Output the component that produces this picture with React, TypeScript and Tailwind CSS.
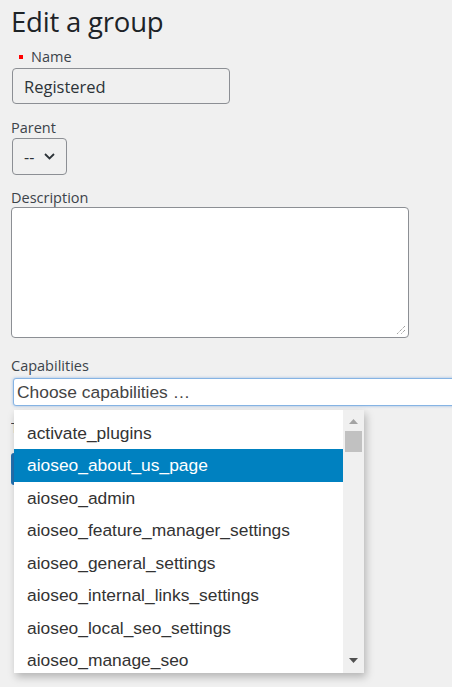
const capabilities = [
  'activate_plugins',
  'aioseo_about_us_page',
  'aioseo_admin',
  'aioseo_feature_manager_settings',
  'aioseo_general_settings',
  'aioseo_internal_links_settings',
  'aioseo_local_seo_settings',
  'aioseo_manage_seo',
]

const uiFont = { fontFamily: '"Open Sans", "Noto Sans", sans-serif' }
const arial = { fontFamily: '"Liberation Sans", Arial, sans-serif' }

export default function App() {
  const selected = 'aioseo_about_us_page'

  return (
    <div
      className="relative min-h-[687px] overflow-hidden bg-[#f0f0f0] pl-[11px] pt-[2px] text-[#1d2327]"
      style={uiFont}
    >
      <h1 className="text-[27.5px] leading-[40px] tracking-[-0.2px] text-[#1d2327]">Edit a group</h1>

      {/* Name */}
      <div className="mt-[6px] flex items-center gap-[8px] pl-[8px] text-[14.5px] leading-[17px] text-[#3c434a]">
        <span className="h-[4px] w-[4px] bg-[#ff0000]" />
        <span>Name</span>
      </div>
      <input
        readOnly
        value="Registered"
        className="mt-[3px] ml-[1px] block h-[36px] w-[218px] rounded-[4px] border border-[#8c8f94] bg-[#f0f0f0] px-[11px] text-[16.5px] text-[#2c3338] outline-none"
      />

      {/* Parent */}
      <label className="mt-[15px] block text-[14.5px] leading-[17px] text-[#3c434a]">Parent</label>
      <div className="mt-[2px] ml-[1px] flex h-[37px] w-[55px] items-center gap-[10px] rounded-[4px] border border-[#8c8f94] bg-[#f0f0f0] pl-[11px] text-[16px] text-[#2c3338]">
        <span>--</span>
        <svg width="11" height="7" viewBox="0 0 11 7" fill="none">
          <path d="M1 1l4.5 4.5L10 1" stroke="#2c3338" strokeWidth="1.8" />
        </svg>
      </div>

      {/* Description */}
      <label className="mt-[14px] block text-[14.5px] leading-[17px] text-[#3c434a]">Description</label>
      <div className="relative mt-[1px] h-[131px] w-[398px] rounded-[4px] border border-[#8c8f94] bg-white">
        <svg className="absolute bottom-[2px] right-[2px]" width="10" height="10" viewBox="0 0 10 10">
          <path d="M9 1L1 9M9 5L5 9" stroke="#555" strokeWidth="0.8" strokeDasharray="1 1" />
        </svg>
      </div>

      {/* Capabilities */}
      <label className="mt-[19px] block text-[14.5px] leading-[17px] text-[#3c434a]">Capabilities</label>
      <div
        className="mt-[4px] ml-[2px] flex h-[28px] w-[460px] items-center rounded-[3px] border border-[#86b4e4] bg-white pl-[3px] text-[17.4px] text-[#444] shadow-[0_0_3px_rgba(90,150,220,0.6)]"
        style={arial}
      >
        Choose capabilities …
      </div>
      <p className="mt-[13px] w-[358px] truncate text-[14px] leading-[17px] text-[#3c434a]">
        The group's capabilities are granted to its members.
      </p>
      <div className="mt-[17px] flex h-[32px] w-[60px] items-center rounded-[3px] bg-[#2271b1] px-[10px] text-[13px] text-white">
        Save
      </div>

      {/* Open capabilities dropdown */}
      <div
        className="absolute left-[14px] top-[410px] flex h-[263px] w-[350px] bg-white shadow-[2px_4px_8px_rgba(0,0,0,0.25)]"
        style={arial}
      >
        <ul className="flex-1 overflow-hidden pt-[6.5px]">
          {capabilities.map((cap) => (
            <li
              key={cap}
              className={
                cap === selected
                  ? 'flex h-[32.5px] items-center bg-[#0081c0] pl-[13px] text-[17.4px] text-white'
                  : 'flex h-[32.5px] items-center pl-[13px] text-[17.4px] text-[#333]'
              }
            >
              {cap}
            </li>
          ))}
        </ul>
        <div className="flex w-[21px] flex-col items-center bg-[#f0f0f0]">
          <svg className="mt-[9px]" width="9" height="5" viewBox="0 0 9 5">
            <path d="M4.5 0L9 5H0z" fill="#a3a3a3" />
          </svg>
          <div className="mt-[7px] h-[21px] w-[17px] bg-[#c1c1c1]" />
          <div className="flex-1" />
          <svg className="mb-[10px]" width="9" height="5" viewBox="0 0 9 5">
            <path d="M0 0h9L4.5 5z" fill="#505050" />
          </svg>
        </div>
      </div>
    </div>
  )
}
